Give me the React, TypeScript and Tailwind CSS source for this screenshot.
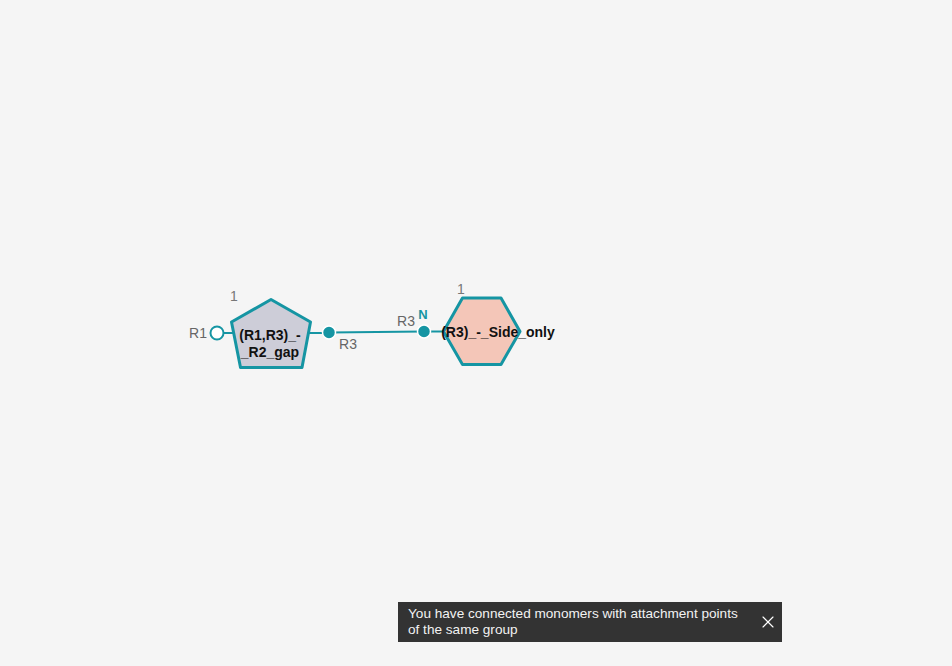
import { X } from "lucide-react";

const TEAL = "#1595a3";

const Canvas = () => (
  <svg width="952" height="666" className="block" style={{ fontFamily: '"Liberation Sans", Arial, sans-serif' }}>
    {/* bond between monomers */}
    <line x1="329" y1="332.5" x2="424" y2="331.5" stroke={TEAL} strokeWidth="2" />

    {/* monomer 1: pentagon */}
    <line x1="223" y1="333" x2="233" y2="333" stroke={TEAL} strokeWidth="2" />
    <line x1="309" y1="333" x2="324" y2="333" stroke={TEAL} strokeWidth="2" />
    <polygon
      points="271,299.5 231.5,322 240.5,367.5 302,367.5 310.5,322"
      fill="#cdcdd8"
      stroke={TEAL}
      strokeWidth="3"
      strokeLinejoin="round"
    />
    <text x="234" y="301" fontSize="14" fill="#777" textAnchor="middle">1</text>
    <text x="270" y="340" fontSize="14" fontWeight="bold" fill="#111" textAnchor="middle">(R1,R3)_-</text>
    <text x="270" y="357" fontSize="14" fontWeight="bold" fill="#111" textAnchor="middle">_R2_gap</text>

    <circle cx="217" cy="333" r="6.5" fill="#fff" stroke={TEAL} strokeWidth="2" />
    <text x="198" y="338" fontSize="14" fill="#666" textAnchor="middle">R1</text>

    <circle cx="329" cy="332.5" r="6.5" fill={TEAL} stroke="#fff" strokeWidth="1.5" />
    <text x="348" y="349" fontSize="14" fill="#666" textAnchor="middle">R3</text>

    {/* monomer 2: hexagon */}
    <line x1="428" y1="331.5" x2="444" y2="331.5" stroke={TEAL} strokeWidth="2" />
    <polygon
      points="443.5,331.5 462.5,298 501,298 520,331.5 501,364.5 462.5,364.5"
      fill="#f4c6b8"
      stroke={TEAL}
      strokeWidth="3"
      strokeLinejoin="round"
    />
    <text x="461" y="294" fontSize="14" fill="#777" textAnchor="middle">1</text>
    <text x="498" y="337" fontSize="14" fontWeight="bold" fill="#111" textAnchor="middle">(R3)_-_Side_only</text>

    <circle cx="424" cy="331.5" r="6.5" fill={TEAL} stroke="#fff" strokeWidth="1.5" />
    <text x="406" y="326" fontSize="14" fill="#666" textAnchor="middle">R3</text>
    <text x="423" y="319" fontSize="13" fontWeight="bold" fill={TEAL} textAnchor="middle">N</text>
  </svg>
);

export default function App() {
  return (
    <div className="relative w-[952px] h-[666px] overflow-hidden bg-[#f5f5f5]">
      <Canvas />
      <div className="absolute left-[398px] top-[602px] w-[384px] h-[40px] bg-[#333333] flex items-center pl-[10px] pr-[4px] font-['Liberation_Sans',Arial,sans-serif]">
        <p className="flex-1 text-[13.6px] leading-[16px] text-[#f2f2f2]">
          You have connected monomers with attachment points
          <br />
          of the same group
        </p>
        <X className="w-[20px] h-[20px] text-white" strokeWidth={1.4} />
      </div>
    </div>
  );
}
